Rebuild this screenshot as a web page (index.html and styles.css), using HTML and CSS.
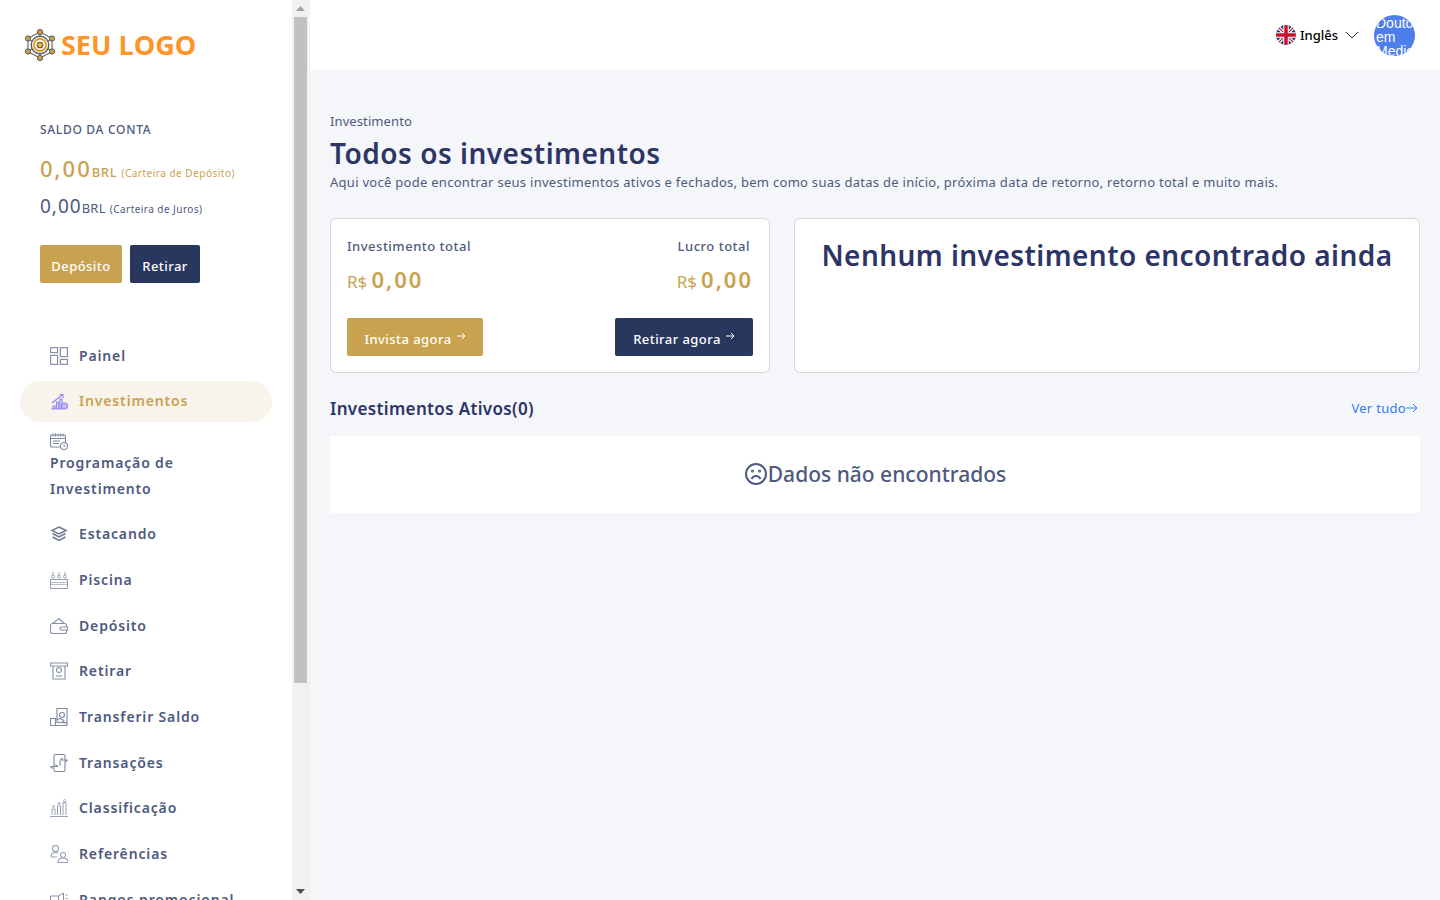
FILE: index.html
```html
<!DOCTYPE html>
<html lang="pt">
<head>
<meta charset="utf-8">
<title>Investimentos</title>
<link rel="stylesheet" href="styles.css">
</head>
<body>
<div class="app">
  <aside class="sidebar">
    <div class="side-scroll">
      <div class="logo">
        <svg class="logo-mark" viewBox="0 0 34 34" width="34" height="34" fill="none">
          <path d="M17 4 29 10.500V23.500L17 30 5 23.500V10.500Z" stroke="#777" stroke-width="1.300"/>
          <path d="M17 4V9M29 10.500 24 14M29 23.500 24 20M17 30V25M5 23.500 10 20M5 10.500 10 14" stroke="#777" stroke-width="1.300"/>
          <circle cx="17" cy="17" r="8.800" fill="#f3f3f3" stroke="#5f5f5f" stroke-width="1.400"/>
          <circle cx="17" cy="17" r="6" fill="#fff" stroke="#e0a030" stroke-width="2"/>
          <circle cx="17" cy="17" r="2.700" fill="#eebb55" stroke="#7a6428" stroke-width="1.300"/>
          <g fill="#c9a04e" stroke="#555" stroke-width="1"><circle cx="17" cy="4" r="2.600"/><circle cx="29" cy="10.500" r="2.600"/><circle cx="29" cy="23.500" r="2.600"/><circle cx="17" cy="30" r="2.600"/><circle cx="5" cy="23.500" r="2.600"/><circle cx="5" cy="10.500" r="2.600"/></g>
        </svg>
        <span class="logo-text">SEU LOGO</span>
      </div>
      <div class="balance">
        <div class="balance-label">SALDO DA CONTA</div>
        <div class="balance-main"><span class="amount-lg">0,00</span><span class="unit-lg">BRL</span> <small class="wallet-lg">(Carteira de Depósito)</small></div>
        <div class="balance-sub"><span class="amount-md">0,00</span><span class="unit-md">BRL</span> <small class="wallet-md">(Carteira de Juros)</small></div>
        <div class="balance-actions">
          <a class="btn btn-gold btn-side-a">Depósito</a>
          <a class="btn btn-navy btn-side-b">Retirar</a>
        </div>
      </div>
      <nav class="nav">
        <a class="nav-item">
          <svg class="ico" viewBox="0 0 18 18" fill="none" stroke="#8790a8" stroke-width="1.200"><rect x=".6" y=".6" width="7" height="5"/><rect x="10.400" y=".6" width="7" height="9"/><rect x=".6" y="8.400" width="7" height="9"/><rect x="10.400" y="12.400" width="7" height="5"/></svg>
          <span>Painel</span>
        </a>
        <a class="nav-item active">
          <svg class="ico" viewBox="0 0 18 18" fill="none" stroke="#9488ec" stroke-width="1.200"><path d="M2 11 12 3M9.500 2.500h3.500V6"/><path d="M1 17h11M3 17v-3h2v3M6.500 17V10h2v7M10 17V7h2v10" /><circle cx="14.500" cy="14" r="3" fill="#c4bcf5"/></svg>
          <span>Investimentos</span>
        </a>
        <a class="nav-item nav-item-wrap">
          <svg class="ico ico-wrap" viewBox="0 0 18 17" fill="none" stroke="#7f89a4" stroke-width="1.100"><rect x=".5" y="2" width="15" height="12" rx="1"/><path d="M.5 5.500h15M3 .5v3M5.500 .5v3M8 .5v3M10.500 .5v3M13 .5v3M3 8h7M3 10.500h6"/><circle cx="14" cy="13" r="3.500" fill="#fff"/><path d="M14 11.500V13h1.500"/></svg>
          <span class="nav-wrap-text">Programação de Investimento</span>
        </a>
        <a class="nav-item">
          <svg class="ico" viewBox="0 0 18 18" fill="none" stroke="#6f7a98" stroke-width="1.500"><path d="M9 2 16 5.500 9 9 2 5.500Z"/><path d="M2.500 8.500 9 12l6.500-3.500M2.500 12 9 15.500l6.500-3.500"/></svg>
          <span>Estacando</span>
        </a>
        <a class="nav-item">
          <svg class="ico" viewBox="0 0 18 18" fill="none" stroke="#98a0b5"><rect x=".5" y="8.500" width="17" height="9"/><path d="M.5 11.500h17M.5 13.500h17" stroke-dasharray="2 1"/><circle cx="3" cy="5.500" r="1.500"/><circle cx="9" cy="5.500" r="1.500"/><circle cx="15" cy="5.500" r="1.500"/><path d="M3 4V1M9 4V1M15 4V1"/></svg>
          <span>Piscina</span>
        </a>
        <a class="nav-item">
          <svg class="ico" viewBox="0 0 18 18" fill="none" stroke="#8790a8" stroke-width="1.100"><path d="M2.500 6.500 9 1.500l5 5"/><rect x=".5" y="6.500" width="16" height="10" rx="2"/><path d="M17.500 10h-6a1.500 1.500 0 0 0 0 3h6z" fill="#fff"/></svg>
          <span>Depósito</span>
        </a>
        <a class="nav-item">
          <svg class="ico" viewBox="0 0 18 18" fill="none" stroke="#8790a8" stroke-width="1.100"><path d="M.5 1h17v3h-17z"/><path d="M3 4v13h12V4"/><circle cx="9" cy="8" r="2.500"/><path d="M6 14h6"/></svg>
          <span>Retirar</span>
        </a>
        <a class="nav-item">
          <svg class="ico" viewBox="0 0 18 18" fill="none" stroke="#7f89a4" stroke-width="1.100"><rect x="7" y=".5" width="10" height="14"/><circle cx="12" cy="7" r="2.500"/><rect x=".5" y="10.500" width="5" height="7"/><path d="M5.500 12 10 10.500l4 2-2 2 5 .5v2.500H5.500"/></svg>
          <span>Transferir Saldo</span>
        </a>
        <a class="nav-item">
          <svg class="ico" viewBox="0 0 18 18" fill="none" stroke="#7f89a4" stroke-width="1.100"><rect x="4" y=".5" width="11" height="17" rx="1.500"/><path d="M.5 12.500h7l-2-2M.5 12.500l2 2M17.500 6h-7l2-2M17.500 6l-2 2"/><path d="M10 7v5"/></svg>
          <span>Transações</span>
        </a>
        <a class="nav-item">
          <svg class="ico" viewBox="0 0 18 18" fill="none" stroke="#98a0b5"><path d="M0 17.500h18M2 16v-6h3v6M7.500 16V7h3v9M13 16V3.500h3V16"/><circle cx="3.500" cy="7.500" r="1"/><circle cx="9" cy="4.500" r="1"/><circle cx="14.500" cy="1.500" r="1"/></svg>
          <span>Classificação</span>
        </a>
        <a class="nav-item">
          <svg class="ico" viewBox="0 0 18 18" fill="none" stroke="#98a0b5" stroke-width="1.100"><circle cx="5.500" cy="3.500" r="3"/><path d="M1 12c0-3 2-4.500 4.500-4.500 1 0 2 .2 2.500.6M1 12h6"/><circle cx="13" cy="10" r="2.500"/><path d="M8 17.500c0-3 2-4.500 5-4.500s5 1.500 5 4.500z"/></svg>
          <span>Referências</span>
        </a>
        <a class="nav-item">
          <svg class="ico" viewBox="0 0 18 18" fill="none" stroke="#8790a8"><path d="M.5 5h8v5h-8zM8.500 5l5-3v11l-5-3M3 10v5h3v-5M15.500 4h2M15.500 7.500h2M15.500 11h2"/></svg>
          <span>Rangos promocional</span>
        </a>
      </nav>
    </div>
    <div class="scrollbar" aria-hidden="true">
      <div class="sb-btn"><svg viewBox="0 0 9 5" width="9" height="5"><path d="M0 5 4.500 0 9 5z" fill="#a3a3a3"/></svg></div>
      <div class="sb-track"><div class="sb-thumb"></div></div>
      <div class="sb-btn"><svg viewBox="0 0 9 5" width="9" height="5"><path d="M0 0 4.500 5 9 0z" fill="#505050"/></svg></div>
    </div>
  </aside>

  <div class="content">
    <header class="topbar">
      <div class="lang">
        <svg class="flag" viewBox="0 0 20 20" width="20" height="20">
          <defs><clipPath id="fc"><circle cx="10" cy="10" r="10"/></clipPath></defs>
          <g clip-path="url(#fc)">
            <rect width="20" height="20" fill="#2b3a72"/>
            <path d="M0 0 20 20M20 0 0 20" stroke="#fff" stroke-width="3.500"/>
            <path d="M0 0 20 20M20 0 0 20" stroke="#c8102e" stroke-width="1.200"/>
            <path d="M10 0V20M0 10H20" stroke="#fff" stroke-width="5.500"/>
            <path d="M10 0V20M0 10H20" stroke="#c8102e" stroke-width="3.500"/>
          </g>
        </svg>
        <span class="lang-name">Inglês</span>
        <svg class="chev" viewBox="0 0 14 8" width="14" height="8" fill="none" stroke="#222"><path d="M1 1 7 7 13 1"/></svg>
      </div>
      <div class="avatar">Doutor em Medicina</div>
    </header>

    <main class="main">
      <div class="crumb">Investimento</div>
      <h1 class="title">Todos os investimentos</h1>
      <p class="desc">Aqui você pode encontrar seus investimentos ativos e fechados, bem como suas datas de início, próxima data de retorno, retorno total e muito mais.</p>

      <section class="cards">
        <div class="card card-total">
          <div class="stats">
            <div class="stat">
              <div class="stat-label">Investimento total</div>
              <div class="stat-value"><span class="cur">R$</span> <span class="val">0,00</span></div>
            </div>
            <div class="stat stat-right">
              <div class="stat-label">Lucro total</div>
              <div class="stat-value"><span class="cur">R$</span> <span class="val">0,00</span></div>
            </div>
          </div>
          <div class="card-actions">
            <a class="btn btn-gold btn-card-a">Invista agora<svg class="arrow" viewBox="0 0 9 8" width="9" height="8" fill="none" stroke="#fff"><path d="M0 4h8M5 1l3 3-3 3"/></svg></a>
            <a class="btn btn-navy btn-card-b">Retirar agora<svg class="arrow" viewBox="0 0 9 8" width="9" height="8" fill="none" stroke="#fff"><path d="M0 4h8M5 1l3 3-3 3"/></svg></a>
          </div>
        </div>
        <div class="card card-empty">
          <h2 class="empty-title">Nenhum investimento encontrado ainda</h2>
        </div>
      </section>

      <div class="section-head">
        <h3 class="section-title">Investimentos Ativos(0)</h3>
        <a class="see-all">Ver tudo<svg viewBox="0 0 12 10" width="12" height="10" fill="none" stroke="#2f7df6"><path d="M0 5h11M7 1l4 4-4 4"/></svg></a>
      </div>

      <div class="nodata">
        <svg class="sad" viewBox="0 0 24 24" width="24" height="24" fill="none" stroke="#4e5a80" stroke-width="2"><circle cx="12" cy="12" r="10"/><path d="M7.500 17c1-2 2.700-3 4.500-3s3.500 1 4.500 3"/><circle cx="8.500" cy="9" r=".6"/><circle cx="15.500" cy="9" r=".6"/></svg>
        <span>Dados não encontrados</span>
      </div>
    </main>
  </div>
</div>
</body>
</html>
```

FILE: styles.css
```css
* { box-sizing: border-box; }
html, body { margin: 0; height: 100%; overflow: hidden; }
body { font-family: "Noto Sans", "Open Sans", sans-serif; color: #4e5a80; background: #f5f6fa; }
h1, h2, h3, p { margin: 0; }

.app { display: flex; height: 100vh; }

.sidebar { flex: 0 0 310px; display: flex; height: 100vh; background: #fff; border-right: 1px solid #f3f3f3; }
.side-scroll { flex: 0 0 292px; height: 100%; overflow: hidden; }
.scrollbar { flex: 0 0 17px; display: flex; flex-direction: column; background: #f1f1f1; }
.sb-btn { flex: 0 0 17px; display: flex; align-items: center; justify-content: center; }
.sb-track { flex: 1; padding: 0 2px; }
.sb-thumb { height: 666px; background: #c1c1c1; }

.logo { display: flex; align-items: center; gap: 3px; padding: 27px 0 0 23px; height: 62px; }
.logo-mark { flex: none; }
.logo-text { font-family: "Open Sans", sans-serif; font-weight: 700; font-size: 27px; line-height: 37px; color: #ff9429; margin-left: 1px; }

.balance { padding: 60px 0 0 40px; }
.balance-label { font-size: 12px; line-height: 16px; font-weight: 500; letter-spacing: .7px; }
.balance-main { margin-top: 16px; line-height: 28px; color: #c9a250; white-space: nowrap; }
.amount-lg { font-size: 22px; font-weight: 500; letter-spacing: 2px; }
.unit-lg { font-size: 13px; font-weight: 500; letter-spacing: .6px; }
.wallet-lg { font-size: 10px; letter-spacing: .5px; }
.balance-sub { margin-top: 5px; line-height: 28px; white-space: nowrap; }
.amount-md { font-size: 19px; letter-spacing: 1px; }
.unit-md { font-size: 13px; letter-spacing: .2px; }
.wallet-md { font-size: 10px; letter-spacing: .45px; }
.balance-actions { display: flex; gap: 8px; margin-top: 22px; }

.btn { display: inline-flex; align-items: center; justify-content: center; height: 38px; padding-top: 3px; border-radius: 2px; color: #fff; font-size: 13px; font-weight: 500; letter-spacing: .45px; white-space: nowrap; }
.btn-gold { background: #c9a250; }
.btn-navy { background: #29375f; }
.btn-side-a { width: 82px; }
.btn-side-b { width: 70px; }
.btn-card-a { width: 136px; }
.btn-card-b { width: 138px; }
.arrow { flex: none; margin: 0 0 5px 5px; }

.nav { width: 292px; padding: 52px 20px 244px; }
.nav-item { display: flex; align-items: center; gap: 11px; min-height: 41px; margin-bottom: 4.670px; padding: 0 10px 0 30px; border-radius: 21px; font-size: 14px; line-height: 26px; font-weight: 600; letter-spacing: .85px; white-space: nowrap; }
.nav-item.active { background: #f8f4ec; color: #c9a250; }
.ico { flex: none; width: 18px; height: 18px; }
.nav-item-wrap { display: block; padding-top: 7px; padding-bottom: 7px; }
.ico-wrap { display: block; height: 17px; }
.nav-wrap-text { display: block; white-space: normal; width: 180px; }

.content { flex: 1; min-width: 0; display: flex; flex-direction: column; }
.topbar { height: 70px; flex: none; background: #fff; display: flex; align-items: center; justify-content: flex-end; padding-right: 25px; }
.lang { display: flex; align-items: center; margin-right: 15px; }
.flag { flex: none; }
.lang-name { margin-left: 4px; font-size: 13px; color: #000; font-weight: 500; }
.chev { margin-left: 7px; }
.avatar { width: 41px; height: 41px; border-radius: 50%; overflow: hidden; background: #4e7ee8; color: #fff; font-family: "Liberation Sans", sans-serif; font-size: 14px; line-height: 14px; padding: 1px 0 0 2px; }

.main { padding: 42px 20px 0; }
.crumb { font-size: 13px; line-height: 18px; letter-spacing: .1px; }
.title { font-size: 28px; line-height: 36px; font-weight: 600; letter-spacing: .5px; color: #2c3566; margin-top: 5px; }
.desc { font-size: 13px; line-height: 18px; letter-spacing: .28px; margin-top: 2px; }

.cards { display: flex; gap: 24px; margin-top: 27px; height: 155px; }
.card { background: #fff; border: 1px solid #d5d7db; border-radius: 6px; }
.card-total { flex: 0 0 440px; padding: 16px; display: flex; flex-direction: column; }
.card-empty { flex: 1; text-align: center; padding-top: 18px; }
.stats { display: flex; justify-content: space-between; }
.stat-right { text-align: right; }
.stat-right .stat-label { padding-right: 3px; }
.stat-label { font-size: 13px; line-height: 22px; font-weight: 500; letter-spacing: .5px; }
.stat-value { margin-top: 6px; line-height: 32px; color: #c9a250; }
.cur { font-size: 17px; font-weight: 400; }
.val { font-size: 22px; font-weight: 600; letter-spacing: 2px; }
.card-actions { display: flex; justify-content: space-between; margin-top: auto; }
.empty-title { font-size: 28px; line-height: 36px; font-weight: 600; letter-spacing: .45px; color: #2c3566; }

.section-head { display: flex; justify-content: space-between; align-items: center; margin-top: 23px; height: 26px; }
.section-title { font-size: 17px; line-height: 26px; font-weight: 600; letter-spacing: .35px; color: #2c3566; }
.see-all { font-size: 13px; letter-spacing: .3px; color: #2f7df6; display: flex; align-items: center; padding-right: 2px; margin-top: -2px; }

.nodata { display: flex; align-items: center; justify-content: center; height: 77px; margin-top: 14px; padding-bottom: 2px; background: #fff; font-size: 21px; font-weight: 500; }
.sad { flex: none; }
```
